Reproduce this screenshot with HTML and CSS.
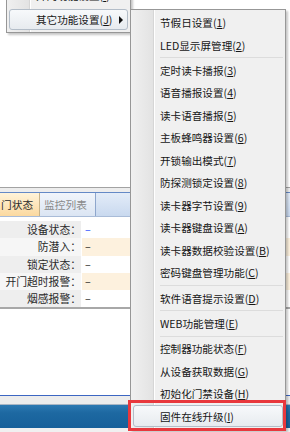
FILE: index.html
```html
<!DOCTYPE html>
<html lang="zh-CN">
<head>
<meta charset="utf-8">
<title>门禁</title>
<link rel="stylesheet" href="styles.css">
</head>
<body>
<div class="app">
  <div class="blank"></div>
  <div class="rule"></div>
  <div class="tabs">
    <div class="tab active">门状态</div>
    <div class="tab">监控列表</div>
  </div>
  <div class="grid">
    <div class="row odd"><div class="lbl">设备状态：</div><div class="val blue">–</div></div>
    <div class="row even"><div class="lbl">防潜入：</div><div class="val">–</div></div>
    <div class="row odd"><div class="lbl">锁定状态：</div><div class="val">–</div></div>
    <div class="row even"><div class="lbl">开门超时报警：</div><div class="val">–</div></div>
    <div class="row odd"><div class="lbl">烟感报警：</div><div class="val">–</div></div>
  </div>
  <div class="grid-end"></div>
  <div class="empty"></div>
  <div class="bottom-line"></div>
  <div class="gap"></div>
  <div class="statusbar"></div>
  <div class="foot"></div>
</div>

<div class="menu menu-main">
  <div class="item cut">开门功能设置(<u>I</u>)</div>
  <div class="item hot">其它功能设置(<u>J</u>)<span class="arrow"></span></div>
</div>

<div class="menu menu-sub">
  <div class="item">节假日设置(<u>1</u>)</div>
  <div class="item">LED显示屏管理(<u>2</u>)</div>
  <div class="sep"></div>
  <div class="item">定时读卡播报(<u>3</u>)</div>
  <div class="item">语音播报设置(<u>4</u>)</div>
  <div class="item">读卡语音播报(<u>5</u>)</div>
  <div class="item">主板蜂鸣器设置(<u>6</u>)</div>
  <div class="item">开锁输出模式(<u>7</u>)</div>
  <div class="item">防探测锁定设置(<u>8</u>)</div>
  <div class="item">读卡器字节设置(<u>9</u>)</div>
  <div class="item">读卡器键盘设置(<u>A</u>)</div>
  <div class="item">读卡器数据校验设置(<u>B</u>)</div>
  <div class="item">密码键盘管理功能(<u>C</u>)</div>
  <div class="sep"></div>
  <div class="item">软件语音提示设置(<u>D</u>)</div>
  <div class="sep"></div>
  <div class="item">WEB功能管理(<u>E</u>)</div>
  <div class="sep"></div>
  <div class="item">控制器功能状态(<u>F</u>)</div>
  <div class="item">从设备获取数据(<u>G</u>)</div>
  <div class="item">初始化门禁设备(<u>H</u>)</div>
  <div class="item hot">固件在线升级(<u>I</u>)</div>
</div>

<div class="annot"></div>
</body>
</html>
```

FILE: styles.css
```css
html, body {
  margin: 0;
  padding: 0;
}
body {
  width: 290px;
  height: 432px;
  overflow: hidden;
  position: relative;
  background: #fff;
  font-family: "Noto Sans CJK SC", "Noto Sans", sans-serif;
  color: #1a1a1a;
}

/* ---------- background application ---------- */
.app {
  display: flex;
  flex-direction: column;
  width: 290px;
}
.blank {
  height: 187px;
  background: #fff;
}
.rule {
  height: 4px;
  border-top: 1px solid #a3a3a3;
  background: #ededed;
}
.tabs {
  height: 23px;
  display: flex;
  border-top: 1px solid #6489c6;
  border-bottom: 1px solid #a9bcd8;
  background: linear-gradient(#e3ecf8, #c9d9ef);
}
.tab {
  display: flex;
  align-items: center;
  font-size: 10.7px;
  padding: 0 5px 0 1px;
  border-right: 1px solid #8ea6cc;
  color: #8a8a8a;
  background: linear-gradient(#f1f5fb, #dbe5f3);
}
.tab.active {
  color: #2b2b2b;
  padding: 0 6px 0 1px;
  border-right: 1px solid #c7b38a;
  background: linear-gradient(#fff3d9, #fbd9a0);
}
.tab + .tab {
  padding-left: 4px;
  width: 46px;
}
.grid {
  margin-top: 4px;
  display: flex;
  flex-direction: column;
}
.row {
  height: 17.25px;
  display: grid;
  grid-template-columns: 81px 1fr;
  column-gap: 1px;
  font-size: 10.8px;
  line-height: 17.25px;
}
.lbl {
  text-align: right;
  color: #2a2a2a;
}
.val {
  padding-left: 3px;
  color: #222;
}
.val.blue {
  color: #2448ff;
}
.row.odd .lbl { background: #eeeeee; }
.row.odd .val { background: #ffffff; }
.row.even .lbl { background: #f6f6f6; }
.row.even .val { background: #fdf1de; }
.grid-end {
  height: 2px;
  background: #a8a8a8;
}
.empty {
  height: 86px;
  background: #fff;
}
.bottom-line {
  height: 1px;
  background: #3c66c2;
}
.gap {
  height: 8px;
  background: #ececec;
}
.statusbar {
  height: 24px;
  border-top: 1px solid #a9b6c4;
  box-sizing: border-box;
  background: linear-gradient(#2c79b2, #1d68a1 35%, #17609a);
}
.foot {
  height: 5px;
  background: #f0f0f0;
}

/* ---------- menus ---------- */
.menu {
  position: absolute;
  box-sizing: border-box;
  border: 1px solid #979797;
  padding: 1.25px 2px;
  box-shadow: 2px 2px 2px rgba(0, 0, 0, 0.22);
  background:
    linear-gradient(to right, #f0f0f0, #e3e3e3) no-repeat 0 0 / 22px 100%,
    linear-gradient(#d6d6d6, #d6d6d6) no-repeat 22px 0 / 1px 100%,
    linear-gradient(#ffffff, #ffffff) no-repeat 23px 0 / 1px 100%,
    #f0f0f0;
}
.menu-main {
  left: 6px;
  top: -17px;
  width: 125px;
  padding: 2px;
}
.menu-main .item {
  height: 21px;
}
.menu-main .item.cut {
  height: 23px;
  padding-bottom: 4px;
}
.menu-sub {
  left: 130px;
  top: 9px;
  width: 156px;
}
.item {
  position: relative;
  height: 22.5px;
  box-sizing: border-box;
  display: flex;
  align-items: center;
  padding-left: 27px;
  font-size: 10.6px;
  white-space: nowrap;
  color: #161616;
}
.item u {
  text-decoration: underline;
  text-underline-offset: 1px;
}
.item.hot {
  padding-left: 26px;
  border: 1px solid #b3bdc8;
  border-radius: 3px;
  background: linear-gradient(#f7f9fb, #e7ebef);
}
.arrow {
  position: absolute;
  right: 4px;
  top: 50%;
  margin-top: -4px;
  width: 0;
  height: 0;
  border-left: 4px solid #111;
  border-top: 4px solid transparent;
  border-bottom: 4px solid transparent;
}
.sep {
  height: 2.75px;
  margin-left: 27px;
  background: linear-gradient(#dcdcdc, #dcdcdc) no-repeat 0 1px / 100% 1px;
}

/* ---------- annotation ---------- */
.annot {
  position: absolute;
  left: 128px;
  top: 400px;
  width: 158px;
  height: 31px;
  box-sizing: border-box;
  border: 3px solid #e8383d;
}
```
